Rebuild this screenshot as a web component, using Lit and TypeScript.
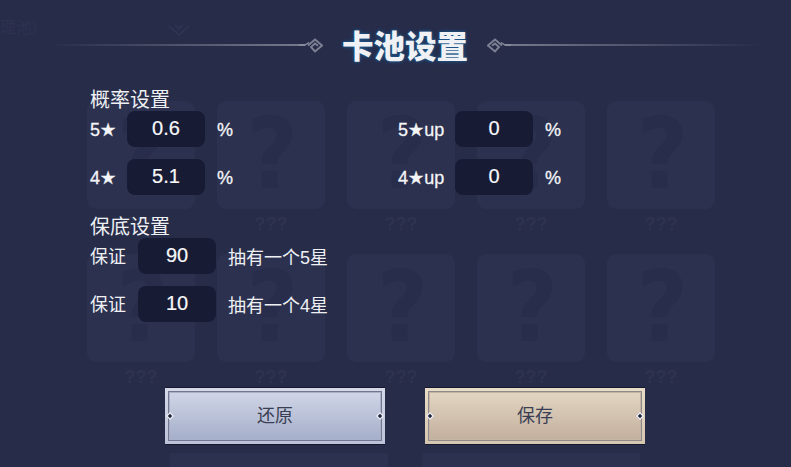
import { LitElement, html, css, svg } from "lit";
import { customElement } from "lit/decorators.js";

const ornament = svg`<path d="M250 7 L256 7 L260 4.5" fill="none" stroke="#8b8e9f" stroke-width="1.3"/><path d="M259 7.5 L266 1.5 L273 7.5 L266 13.5 L262 9 L266 5.5 L269 7.8" fill="none" stroke="#7d8093" stroke-width="1.9"/>`;

@customElement("app-root")
export class AppRoot extends LitElement {
  static styles = css`
    :host {
      display: block;
      width: 791px;
      height: 467px;
      overflow: hidden;
      position: relative;
      background: #272c49;
      font-family: "Liberation Sans", "DejaVu Sans", "Noto Sans CJK SC", sans-serif;
      color: #f4f5f8;
    }
    .bg {
      position: absolute;
      inset: 0;
    }
    .ghost-text {
      position: absolute;
      left: 0;
      top: 16px;
      font-size: 16px;
      line-height: 24px;
      color: #2d3250;
    }
    .chev {
      position: absolute;
      left: 168px;
      top: 23px;
    }
    .cards {
      position: absolute;
      left: 87px;
      top: 101px;
      display: grid;
      grid-template-columns: repeat(5, 108px);
      column-gap: 22px;
      row-gap: 20px;
    }
    .cell {
      display: flex;
      flex-direction: column;
      align-items: center;
      gap: 5px;
    }
    .card {
      width: 108px;
      height: 108px;
      border-radius: 9px;
      background: #2c314f;
      display: flex;
      align-items: center;
      justify-content: center;
    }
    .q {
      font-family: "DejaVu Sans", sans-serif;
      font-weight: 700;
      font-size: 98px;
      line-height: 106px;
      color: #282d4b;
      transform: translate(1px, -1px) scaleX(0.9);
    }
    .cap {
      font-size: 18px;
      line-height: 20px;
      font-weight: 700;
      color: #2e334e;
    }
    .ghost-btn {
      position: absolute;
      top: 453px;
      height: 14px;
      width: 218px;
      background: #2c3150;
    }
    .ghost-btn.a { left: 170px; }
    .ghost-btn.b { left: 422px; }

    .fg {
      position: relative;
      display: flex;
      flex-direction: column;
      height: 467px;
      box-sizing: border-box;
    }
    .head {
      height: 85px;
      padding: 22px 0 0 19px;
      box-sizing: border-box;
      display: flex;
      align-items: flex-start;
      justify-content: center;
      gap: 19px;
    }
    .title {
      font-family: "Noto Sans CJK SC", sans-serif;
      font-weight: 900;
      font-size: 31.5px;
      line-height: 44px;
      color: #f0f1f4;
      text-shadow: 0 0 4px #1d5a8f, 0 0 2px #1d5a8f;
    }
    .rule {
      width: 274px;
      height: 15px;
      margin-top: 16px;
      display: block;
    }
    .rule.r { transform: scaleX(-1); }
    .content {
      padding-left: 90px;
      display: flex;
      flex-direction: column;
    }
    .sect {
      font-size: 20px;
      line-height: 22px;
      padding-top: 4px;
      color: #eef0f4;
    }
    .rows {
      display: flex;
      flex-direction: column;
      gap: 12px;
      margin-bottom: 17px;
    }
    .row { display: flex; align-items: center; }
    .pair { display: flex; align-items: center; }
    .pair.left { width: 308px; }
    .lab {
      font-size: 18px;
      line-height: 22px;
      padding-top: 2px;
      width: 37px;
      -webkit-text-stroke: 0.3px currentColor;
    }
    .lab.up { width: 57px; }
    .lab.cn {
      width: 48px;
      color: #eef0f4;
      -webkit-text-stroke: 0;
    }
    .input {
      width: 78px;
      height: 36px;
      padding-bottom: 2px;
      box-sizing: border-box;
      border-radius: 8px;
      background: #171b33;
      display: flex;
      align-items: center;
      justify-content: center;
      font-size: 20px;
      color: #f7f8fa;
      -webkit-text-stroke: 0.2px currentColor;
    }
    .unit {
      margin: 2px 0 0 12px;
      font-size: 18px;
      line-height: 22px;
      -webkit-text-stroke: 0.3px currentColor;
    }
    .note {
      margin-left: 12px;
      font-size: 18px;
      color: #eef0f4;
    }
    .actions {
      position: absolute;
      top: 388px;
      left: 165px;
      display: flex;
      gap: 40px;
    }
    .btn {
      position: relative;
      width: 220px;
      height: 56px;
      box-sizing: border-box;
      padding: 3px;
      border: 0;
      font-family: "Noto Sans CJK SC", sans-serif;
      font-size: 18px;
      color: #3b3f54;
      box-shadow: 0 -1px 0 #15182e, 0 1px 0 #15182e;
    }
    .btn.blue { background: linear-gradient(#d5d9e8, #bcc2d8); }
    .btn.tan { background: linear-gradient(#e9ddc8, #d5c6b0); }
    .inner {
      height: 100%;
      padding-bottom: 4px;
      box-sizing: border-box;
      border: 1px solid #71778f;
      display: flex;
      align-items: center;
      justify-content: center;
    }
    .blue .inner {
      background: linear-gradient(#d0d6e6, #a5aeca);
      box-shadow: inset 0 0 0 1px #a9b0c8;
    }
    .tan .inner {
      background: linear-gradient(#e2d6c3, #c3af9d);
      border-color: #8e8a8c;
      box-shadow: inset 0 0 0 1px #c2b5a6;
    }
    .dot {
      position: absolute;
      top: 24px;
      width: 8px;
      height: 8px;
    }
    .dot.l { left: 1px; }
    .dot.rr { right: 1px; }
  `;

  private cell() {
    return html`<div class="cell"><div class="card"><span class="q">?</span></div><div class="cap">???</div></div>`;
  }

  private dot(side: string) {
    return html`<svg class="dot ${side}" viewBox="0 0 8 8"><path d="M4 0 L8 4 L4 8 L0 4Z" fill="#eceef3"/><path d="M4 1.8 L6.2 4 L4 6.2 L1.8 4Z" fill="#20243d"/></svg>`;
  }

  render() {
    return html`
      <div class="bg">
        <div class="ghost-text">理池)</div>
        <svg class="chev" width="22" height="14" viewBox="0 0 22 14"><path d="M1 3 L11 12 L21 3 M7 2 L11 5.5 L15 2" fill="none" stroke="#2e3351" stroke-width="2"/></svg>
        <div class="cards">
          ${Array.from({ length: 10 }, () => this.cell())}
        </div>
        <div class="ghost-btn a"></div>
        <div class="ghost-btn b"></div>
      </div>
      <div class="fg">
        <header class="head">
          <svg class="rule" viewBox="0 0 274 15">
            <defs><linearGradient id="lg"><stop offset="0" stop-color="#8b8e9f" stop-opacity="0"/><stop offset="1" stop-color="#8b8e9f"/></linearGradient></defs>
            <rect x="0" y="6.2" width="256" height="1.6" fill="url(#lg)"/>
            ${ornament}
          </svg>
          <div class="title">卡池设置</div>
          <svg class="rule r" viewBox="0 0 274 15">
            <defs><linearGradient id="lg2"><stop offset="0" stop-color="#8b8e9f" stop-opacity="0"/><stop offset="1" stop-color="#8b8e9f"/></linearGradient></defs>
            <rect x="0" y="6.2" width="256" height="1.6" fill="url(#lg2)"/>
            ${ornament}
          </svg>
        </header>
        <div class="content">
          <div class="sect">概率设置</div>
          <div class="rows">
            <div class="row">
              <div class="pair left"><span class="lab">5★</span><span class="input">0.6</span><span class="unit">%</span></div>
              <div class="pair"><span class="lab up">5★up</span><span class="input">0</span><span class="unit">%</span></div>
            </div>
            <div class="row">
              <div class="pair left"><span class="lab">4★</span><span class="input">5.1</span><span class="unit">%</span></div>
              <div class="pair"><span class="lab up">4★up</span><span class="input">0</span><span class="unit">%</span></div>
            </div>
          </div>
          <div class="sect">保底设置</div>
          <div class="rows">
            <div class="row"><span class="lab cn">保证</span><span class="input">90</span><span class="note">抽有一个5星</span></div>
            <div class="row"><span class="lab cn">保证</span><span class="input">10</span><span class="note">抽有一个4星</span></div>
          </div>
        </div>
        <div class="actions">
          <button class="btn blue"><div class="inner">还原</div>${this.dot("l")}${this.dot("rr")}</button>
          <button class="btn tan"><div class="inner">保存</div>${this.dot("l")}${this.dot("rr")}</button>
        </div>
      </div>
    `;
  }
}
